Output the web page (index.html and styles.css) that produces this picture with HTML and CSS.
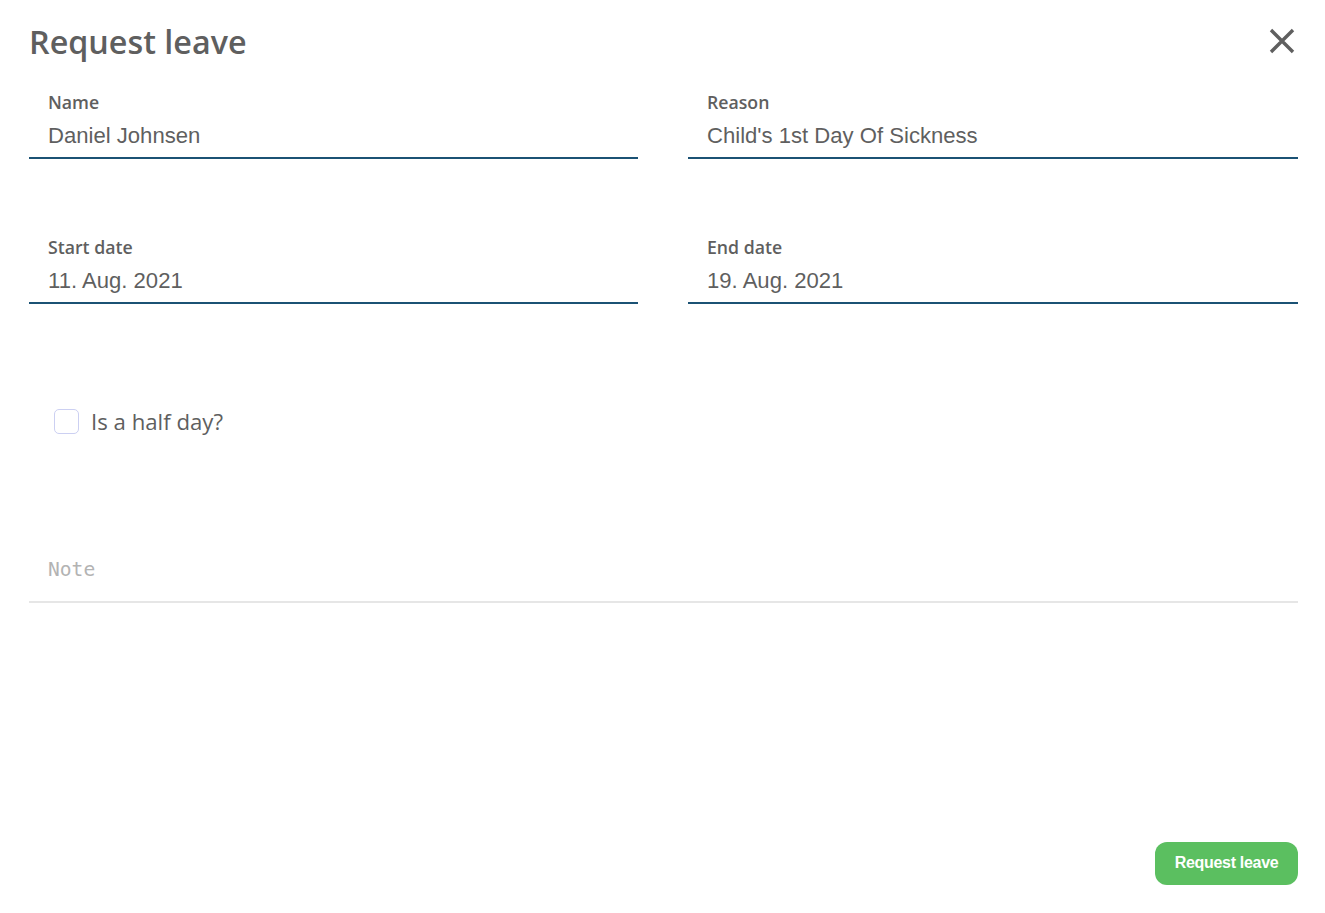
FILE: index.html
```html
<!DOCTYPE html>
<html>
<head>
<meta charset="utf-8">
<link rel="stylesheet" href="styles.css">
</head>
<body>
<div class="dialog">
  <header class="head">
    <h1 class="title">Request leave</h1>
    <button class="close" aria-label="Close">
      <svg width="28" height="28" viewBox="0 0 28 28"><path d="M3 3 L25 25 M25 3 L3 25" stroke="#5f5f5f" stroke-width="3.4" stroke-linecap="butt" fill="none"/></svg>
    </button>
  </header>
  <div class="grid">
    <div class="field">
      <div class="label">Name</div>
      <div class="value">Daniel Johnsen</div>
    </div>
    <div class="field">
      <div class="label">Reason</div>
      <div class="value">Child's 1st Day Of Sickness</div>
    </div>
    <div class="field">
      <div class="label">Start date</div>
      <div class="value">11. Aug. 2021</div>
    </div>
    <div class="field">
      <div class="label">End date</div>
      <div class="value">19. Aug. 2021</div>
    </div>
  </div>
  <label class="check">
    <span class="box"></span>
    <span class="check-text">Is a half day?</span>
  </label>
  <div class="note">
    <span class="placeholder">Note</span>
  </div>
  <div class="actions">
    <button class="submit">Request leave</button>
  </div>
</div>
</body>
</html>
```
FILE: styles.css
```css
html, body {
  margin: 0;
  padding: 0;
  background: #fff;
}
.dialog {
  width: 1325px;
  height: 913px;
  box-sizing: border-box;
  padding: 0 27px 0 29px;
  display: flex;
  flex-direction: column;
}
.head {
  display: flex;
  justify-content: space-between;
  align-items: flex-start;
  height: 80px;
}
.title {
  margin: 19px 0 1px 0;
  font-family: "Open Sans", sans-serif;
  font-weight: 600;
  font-size: 32.3px;
  line-height: 44px;
  color: #5f5f5f;
}
.close {
  border: 0;
  background: none;
  padding: 0;
  margin: 27px 2px 0 0;
  width: 28px;
  height: 28px;
  cursor: pointer;
}
.close svg { display: block; }
.grid {
  display: grid;
  grid-template-columns: 609px 610px;
  column-gap: 50px;
  row-gap: 66px;
}
.field {
  border-bottom: 2px solid #1b5274;
  padding: 0 0 6px 19px;
  height: 79px;
  box-sizing: border-box;
}
.label {
  font-family: "Open Sans", sans-serif;
  font-weight: 600;
  font-size: 17.7px;
  line-height: 24px;
  color: #5f5f5f;
  margin-top: 10px;
}
.value {
  font-family: "Liberation Sans", Arial, sans-serif;
  font-size: 22.1px;
  line-height: 28px;
  color: #5f5f5f;
  margin-top: 8px;
}
.check {
  display: flex;
  align-items: center;
  margin: 102px 0 0 25px;
  height: 30px;
}
.box {
  border: 1.5px solid #ccd0f2;
  border-radius: 5px;
  box-sizing: border-box;
  width: 25px;
  height: 25px;
}
.check-text {
  margin-left: 12px;
  font-family: "Open Sans", sans-serif;
  font-size: 22.2px;
  color: #5f5f5f;
}
.note {
  margin-top: 122px;
  border-bottom: 2px solid #e6e6e6;
  padding: 0 0 19px 19px;
}
.placeholder {
  font-family: "DejaVu Sans Mono", monospace;
  font-size: 19.6px;
  line-height: 24px;
  color: #b3b3b3;
}
.actions {
  margin-top: auto;
  display: flex;
  justify-content: flex-end;
  padding-bottom: 28px;
}
.submit {
  width: 143px;
  height: 43px;
  border: 0;
  border-radius: 12px;
  background: #5bbf60;
  color: #fff;
  font-family: "Liberation Sans", Arial, sans-serif;
  font-weight: 700;
  font-size: 16px;
  letter-spacing: -0.3px;
  line-height: 39px;
  padding: 0 0 2px;
  cursor: pointer;
}
```
